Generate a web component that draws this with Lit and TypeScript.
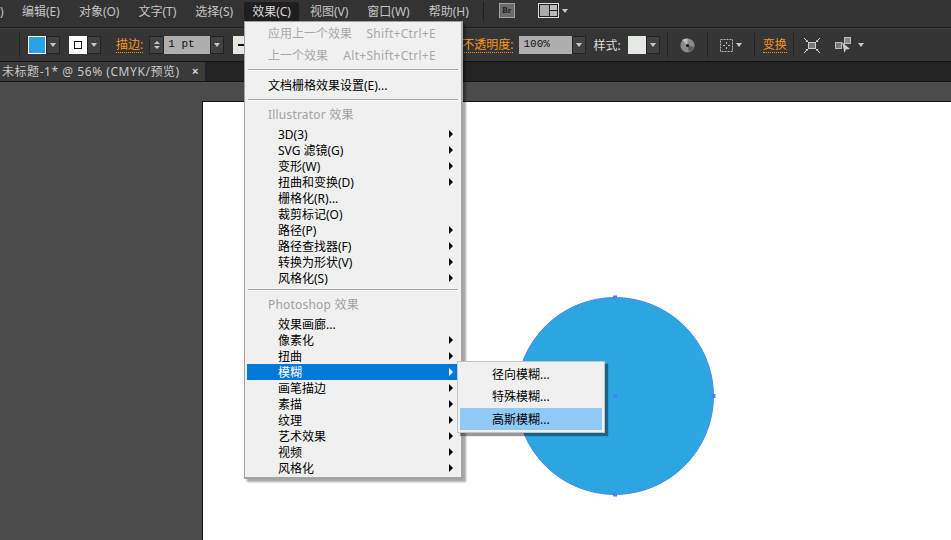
import { LitElement, html, css, svg } from "lit";
import { customElement } from "lit/decorators.js";

type Row =
  | { k: "sep" }
  | { k: "head"; t: string }
  | { k: "dis"; t: string; s: string }
  | { k: "item"; t: string; sub?: boolean; on?: boolean; tall?: boolean };

const rows: Row[] = [
  { k: "dis", t: "应用上一个效果", s: "Shift+Ctrl+E" },
  { k: "dis", t: "上一个效果", s: "Alt+Shift+Ctrl+E" },
  { k: "sep" },
  { k: "item", t: "文档栅格效果设置(E)...", tall: true },
  { k: "sep" },
  { k: "head", t: "Illustrator 效果" },
  { k: "item", t: "3D(3)", sub: true },
  { k: "item", t: "SVG 滤镜(G)", sub: true },
  { k: "item", t: "变形(W)", sub: true },
  { k: "item", t: "扭曲和变换(D)", sub: true },
  { k: "item", t: "栅格化(R)..." },
  { k: "item", t: "裁剪标记(O)" },
  { k: "item", t: "路径(P)", sub: true },
  { k: "item", t: "路径查找器(F)", sub: true },
  { k: "item", t: "转换为形状(V)", sub: true },
  { k: "item", t: "风格化(S)", sub: true },
  { k: "sep" },
  { k: "head", t: "Photoshop 效果" },
  { k: "item", t: "效果画廊..." },
  { k: "item", t: "像素化", sub: true },
  { k: "item", t: "扭曲", sub: true },
  { k: "item", t: "模糊", sub: true, on: true },
  { k: "item", t: "画笔描边", sub: true },
  { k: "item", t: "素描", sub: true },
  { k: "item", t: "纹理", sub: true },
  { k: "item", t: "艺术效果", sub: true },
  { k: "item", t: "视频", sub: true },
  { k: "item", t: "风格化", sub: true },
];

const menus = [
  ["编辑(E)", 0], ["对象(O)", 0], ["文字(T)", 0], ["选择(S)", 0], ["效果(C)", 1],
  ["视图(V)", 0], ["窗口(W)", 0], ["帮助(H)", 0],
] as const;

const drop = html`<span class="dd"><i></i></span>`;

const ic = (content: unknown, w: number, h: number) =>
  html`<svg class="ic" width=${w} height=${h} viewBox="0 0 ${w} ${h}">${content}</svg>`;

@customElement("app-root")
export class AppRoot extends LitElement {
  static styles = css`
    :host {
      display: flex;
      flex-direction: column;
      position: relative;
      width: 951px;
      height: 540px;
      overflow: hidden;
      background: #4b4b4b;
      font-family: "Noto Sans", "Noto Sans CJK SC", sans-serif;
      font-size: 12px;
    }
    .ic { flex: none; display: block; }
    .menubar {
      flex: none;
      height: 28px;
      box-sizing: border-box;
      background: #333333;
      border-bottom: 1px solid #1c1c1c;
      display: flex;
      align-items: flex-start;
      color: #c4c4c4;
      line-height: 19px;
      padding-top: 2px;
    }
    .clip { width: 5px; margin-right: 9px; overflow: hidden; white-space: nowrap; }
    .mi { padding: 0 8px; margin-right: 3px; white-space: nowrap; border-radius: 2px 2px 0 0; }
    .mi.open { background: #1f1f1f; color: #d6d6d6; }
    .vsep { width: 1px; height: 22px; background: #1f1f1f; flex: none; }
    .menubar .vsep { margin: 0 15px 0 3px; height: 19px; }
    .br {
      width: 16px; height: 15px; margin-top: 1px; background: #6b6b6b; border: 1px solid #a0a0a0;
      box-sizing: border-box; color: #1a1a1a; font: bold 8px/13px "Liberation Serif", serif; text-align: center;
      margin-right: 23px;
    }
    .layout { display: flex; align-items: center; gap: 3px; height: 17px; }
    .toolbar {
      flex: none;
      height: 34px;
      box-sizing: border-box;
      background: #353535;
      border-bottom: 1px solid #141414;
      border-top: 1px solid #3e3e3e;
      display: flex;
      align-items: center;
      color: #dcdcdc;
      padding-left: 19px;
    }
    .toolbar .vsep { height: 24px; background: #232323; }
    .sw { width: 18px; height: 18px; box-sizing: border-box; flex: none; }
    .fill { background: #29a4e2; border: 1px solid #fff; }
    .stroke { background: #fff; display: flex; align-items: center; justify-content: center; }
    .stroke b { width: 8px; height: 8px; border: 1px solid #111; display: block; box-sizing: border-box; }
    .dash { background: #e6e6e0; display: flex; align-items: center; justify-content: center; }
    .dash b { width: 8px; height: 2px; background: #111; display: block; }
    .dd {
      width: 14px; height: 18px; flex: none; background: #414141; border: 1px solid #232323; box-sizing: border-box;
      display: flex; align-items: center; justify-content: center;
    }
    .dd i, .arrow {
      display: block; width: 0; height: 0; border-left: 3.5px solid transparent; border-right: 3.5px solid transparent;
      border-top: 4px solid #c8c8c8;
    }
    .orange { color: #f7941e; border-bottom: 1px dotted #f7941e; line-height: 14px; white-space: nowrap; }
    .spin { width: 15px; height: 18px; background: #414141; border: 1px solid #232323; box-sizing: border-box; display: flex; flex-direction: column; justify-content: center; align-items: center; gap: 2px; flex: none; }
    .up { width: 0; height: 0; border-left: 3px solid transparent; border-right: 3px solid transparent; border-bottom: 3px solid #c8c8c8; }
    .dn { width: 0; height: 0; border-left: 3px solid transparent; border-right: 3px solid transparent; border-top: 3px solid #c8c8c8; }
    .field {
      height: 18px; box-sizing: border-box; background: #aeaeae; color: #111; flex: none; padding-left: 4px;
      font: 11px/17px "Liberation Mono", monospace;
    }
    .ml6 { margin-left: 6px; }
    .tab-row {
      flex: none; height: 20px; background: #232323; border-bottom: 1px solid #151515; box-sizing: border-box;
      display: flex; color: #c8c8c8;
    }
    .tab { width: 205px; box-sizing: border-box; background: #3a3a3a; padding-left: 2px; line-height: 19px; display: flex; white-space: nowrap; letter-spacing: .55px; }
    .tab span { flex: 1; }
    .tab em { font: bold 11px/18px "Liberation Sans", sans-serif; color: #ddd; margin-right: 6px; }
    .canvas { flex: 1; position: relative; padding: 19px 0 0 202px; }
    .artboard { height: 100%; background: #fff; border-left: 1px solid #111; border-top: 1px solid #111; box-sizing: border-box; position: relative; }
    .shape { position: absolute; left: 307px; top: 189px; }
    .menu {
      position: absolute; left: 244px; top: 21px; width: 219px; height: 458px; box-sizing: border-box;
      background: #f0f0f0; border: 1px solid #a0a0a0; border-right: 2px solid #a4a4a4; border-bottom: 2px solid #a4a4a4;
      box-shadow: 3px 3px 2px rgba(0,0,0,.35); padding: 0 2px; color: #000; line-height: 16px;
    }
    .r { height: 16px; box-sizing: border-box; padding: 2px 0 0 31px; display: flex; align-items: center; position: relative; white-space: nowrap; }
    .r .tri { position: absolute; left: 202px; top: 4px; width: 0; height: 0; border-left: 4px solid #000; border-top: 4px solid transparent; border-bottom: 4px solid transparent; }
    .r.on { background: #0078d7; color: #fff; }
    .r.on .tri { border-left-color: #fff; }
    .r.dis { height: 22px; padding-left: 21px; color: #a9a9a9; }
    .r.dis .s { position: absolute; left: 0; right: 23px; text-align: right; letter-spacing: .3px; }
    .r.tall { height: 28px; padding-left: 21px; }
    .r.head { height: 25px; padding-left: 21px; padding-top: 3px; color: #a2a2a2; letter-spacing: .2px; }
    .sep { height: 1px; background: #a9a9a9; border-bottom: 1px solid #fff; margin: 3px 1px 0 1px; }
    .menu .tall + .sep { margin-top: 0; }
    .submenu {
      position: absolute; left: 457px; top: 361px; width: 148px; height: 72px; box-sizing: border-box;
      background: #f0f0f0; border: 1px solid #c4c4c4; box-shadow: 3px 3px 1px rgba(0,0,0,.4); padding: 2px; color: #000;
    }
    .submenu div { height: 22px; padding-left: 32px; line-height: 22px; }
    .submenu .hi { background: #90c8f6; line-height: 24px; }
  `;

  private row(r: Row) {
    if (r.k === "sep") return html`<div class="sep"></div>`;
    if (r.k === "head") return html`<div class="r head">${r.t}</div>`;
    if (r.k === "dis") return html`<div class="r dis">${r.t}<span class="s">${r.s}</span></div>`;
    return html`<div class="r ${r.on ? "on" : ""} ${r.tall ? "tall" : ""}">${r.t}${r.sub ? html`<span class="tri"></span>` : ""}</div>`;
  }

  render() {
    return html`
      <div class="menubar">
        <span class="clip">)</span>
        ${menus.map(([t, o]) => html`<span class="mi ${o ? "open" : ""}">${t}</span>`)}
        <span class="vsep"></span>
        <span class="br">Br</span>
        <span class="layout">
          ${ic(svg`<rect x=".5" y=".5" width="20" height="14" fill="#222" stroke="#ddd"/><rect x="2" y="2" width="9" height="11" fill="#aaa"/><rect x="12" y="2" width="7" height="5" fill="#bbb"/><rect x="12" y="8" width="7" height="5" fill="#bbb"/>`, 21, 15)}
          <span class="arrow"></span>
        </span>
      </div>
      <div class="toolbar">
        <span class="vsep" style="margin-right:8px"></span>
        <span class="sw fill"></span>${drop}
        <span class="sw stroke" style="margin-left:9px"><b></b></span>${drop}
        <span class="orange" style="margin-left:15px">描边:</span>
        <span class="spin" style="margin-left:6px"><span class="up"></span><span class="dn"></span></span>
        <span class="field" style="width:46px">1 pt</span>${drop}
        <span class="sw dash" style="margin-left:9px"><b></b></span>
        <span class="orange" style="margin-left:211px">不透明度:</span>
        <span class="field ml6" style="width:53px">100%</span>${drop}
        <span style="margin-left:7px;white-space:nowrap">样式:</span>
        <span class="sw" style="margin-left:7px;background:#e4e8e2"></span>${drop}
        <span class="vsep" style="margin-left:7px"></span>
        <span style="margin:0 12px;display:block">${ic(svg`<circle cx="7.5" cy="7.5" r="7" fill="#8a8a8a"/><path d="M7.5 7.500 L2 2 A7 7 0 0 1 7.500 .5Z" fill="#bdbdbd"/><path d="M7.500 7.500 L14 9 A7 7 0 0 1 9 14Z" fill="#5e5e5e"/><circle cx="7.500" cy="7.500" r="1.500" fill="#111"/>`, 15, 15)}</span>
        <span class="vsep"></span>
        <span style="margin:0 3px 0 12px;display:block">${ic(svg`<rect x=".5" y=".5" width="12" height="12" fill="none" stroke="#bbb" stroke-dasharray="2 1"/><path d="M6.500 3v2M6.500 8v2M3 6.500h2M8 6.500h2" stroke="#bbb"/>`, 13, 13)}</span>
        <span class="arrow"></span>
        <span class="vsep" style="margin-left:12px"></span>
        <span class="orange" style="margin-left:8px">变换</span>
        <span class="vsep" style="margin-left:6px"></span>
        <span style="margin:0 15px 0 10px;display:block">${ic(svg`<rect x="4.500" y="4.500" width="7" height="6" fill="#777" stroke="#ccc"/><path d="M0 0l3 3M16 0l-3 3M0 15l3-3M16 15l-3-3" stroke="#ccc"/><path d="M4 4l-3 0 3 -2ZM12 4l3 0-3-2ZM4 11l-3 0 3 2ZM12 11l3 0-3 2Z" fill="#ccc"/>`, 16, 15)}</span>
        ${ic(svg`<rect x=".5" y="5.500" width="6" height="6" fill="#777" stroke="#bbb"/><rect x="9.500" y=".5" width="6" height="6" fill="#888" stroke="#bbb"/><path d="M7 5l8 7-4 .5-1.500 3.500Z" fill="#c8c8c8"/>`, 16, 16)}
        <span class="arrow" style="margin-left:7px"></span>
      </div>
      <div class="tab-row">
        <div class="tab"><span>未标题-1* @ 56% (CMYK/预览)</span><em>×</em></div>
      </div>
      <div class="canvas">
        <div class="artboard">
          <svg class="shape" width="210" height="210" viewBox="0 0 210 210">
            <circle cx="105" cy="105" r="98.500" fill="#2ca6e0" stroke="#4f86f0" stroke-width="1"/>
            ${[[105, 6.5], [203.5, 105], [105, 203.5], [105, 105]].map(([x, y]) => svg`<rect x=${x - 2} y=${y - 2} width="4" height="4" fill="#4f7ff5"/>`)}
          </svg>
        </div>
      </div>
      <div class="menu">${rows.map((r) => this.row(r))}</div>
      <div class="submenu">
        <div>径向模糊...</div>
        <div>特殊模糊...</div>
        <div class="hi">高斯模糊...</div>
      </div>
    `;
  }
}
